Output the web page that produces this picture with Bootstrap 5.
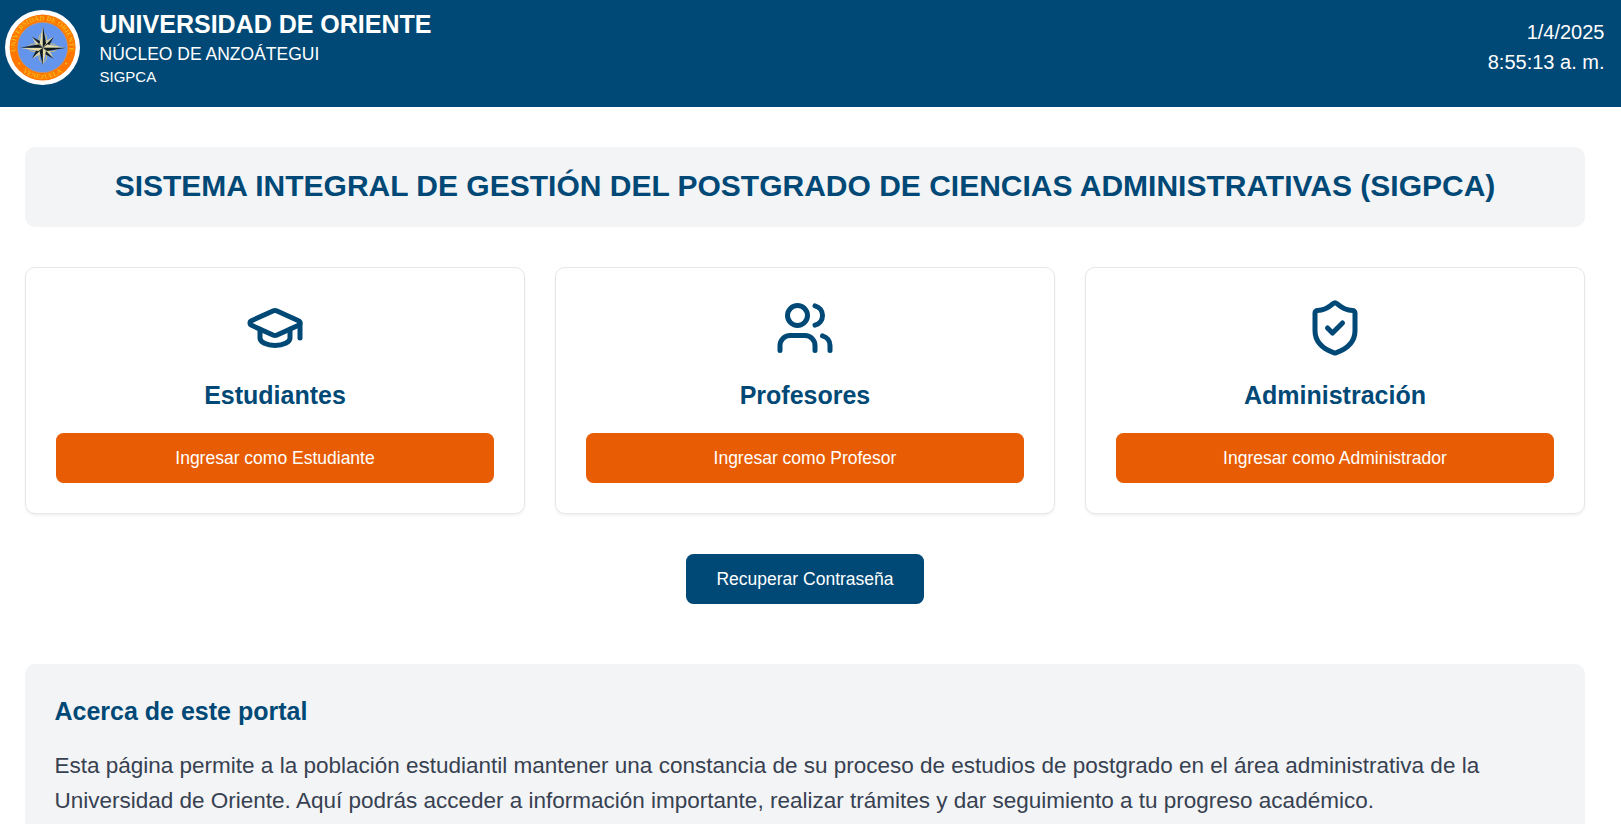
<!DOCTYPE html>
<html lang="es">
<head>
<meta charset="utf-8">
<meta name="viewport" content="width=device-width, initial-scale=1">
<title>SIGPCA - Universidad de Oriente</title>
<link href="https://cdn.jsdelivr.net/npm/bootstrap@5.3.0/dist/css/bootstrap.min.css" rel="stylesheet">
<style>
  :root { --udo-blue: #004976; --udo-orange: #e85d04; --udo-gray: #f3f4f6; }
  html, body { height: 100%; overflow: hidden; }
  body { font-family: "Liberation Sans", Arial, sans-serif; background: #fff; }
  .site-header { background: var(--udo-blue); height: 107px; padding: 9px 16.5px 0 5px; }
  .seal { width: 75px; height: 75px; margin-top: 1px; }
  .brand-text { margin-left: 19.5px; }
  .brand-name { font-size: 25px; line-height: 31.25px; margin-bottom: 1.5px; }
  .brand-campus { font-size: 17.5px; line-height: 25px; }
  .brand-system { font-size: 15px; line-height: 20px; }
  .clock { font-size: 20px; line-height: 30px; padding-top: 7.5px; }
  .portal { width: 1610px; padding: 40px 25px 0; }
  .panel { background: var(--udo-gray); border-radius: 10px; }
  .portal-title { font-size: 30px; line-height: 40px; padding: 19px 20px 21px; color: var(--udo-blue); }
  .access-row { --bs-gutter-x: 30px; margin-top: 40px; }
  .access-card { border: 1px solid #e5e7eb; border-radius: 10px; box-shadow: 0 1.25px 2.5px rgba(0,0,0,.05); }
  .access-card .card-body { padding: 30px; }
  .access-icon { width: 60px; height: 60px; fill: none; stroke: var(--udo-blue); stroke-width: 2; stroke-linecap: round; stroke-linejoin: round; }
  .section-title { font-size: 25px; line-height: 35px; color: var(--udo-blue); }
  .access-card .section-title { margin: 20px 0; }
  .btn-portal { height: 50px; padding: 0 30px; border: 0; border-radius: 7.5px; font-size: 17.5px; line-height: 50px; color: #fff; }
  .btn-portal:hover { color: #fff; }
  .btn-access, .btn-access:hover { background: var(--udo-orange); }
  .btn-recover, .btn-recover:hover { background: var(--udo-blue); }
  .recover { margin: 40px 0 60px; }
  .about { padding: 30px 30px 30px 29.5px; }
  .about-text { font-size: 22.5px; line-height: 35px; color: #374151; margin: 19px 0 0; }
</style>
</head>
<body>
<header class="site-header d-flex justify-content-between align-items-start text-white">
  <div class="d-flex align-items-start">
    <svg class="seal" viewBox="0 0 75 75" role="img" aria-label="Universidad de Oriente">
      <defs>
        <path id="arcTop" d="M14.6 51.7A27 27 0 1 1 60.4 51.7"/>
        <path id="arcBottom" d="M12.6 56.5A31.3 31.3 0 0 0 62.4 56.5"/>
        <g id="ray"><path d="M0 0L-3.2-4.2 0-22z" fill="#e6dca8"/><path d="M0 0L3.2-4.2 0-22z" fill="#111a1c"/></g>
        <g id="halfray"><path d="M0 0L-3.4-4.8 0-15.5z" fill="#d8d2a4"/><path d="M0 0L3.4-4.8 0-15.5z" fill="#172022"/></g>
      </defs>
      <circle cx="37.5" cy="37.5" r="37.5" fill="#fff"/>
      <circle cx="37.6" cy="37.5" r="33" fill="#ff7600"/>
      <circle cx="37.6" cy="37.5" r="25.2" fill="#6495ed" stroke="#dd9a50" stroke-width=".6"/>
      <g font-family="Liberation Serif, serif" font-weight="700" font-size="7" fill="#f5b81c">
        <text letter-spacing="-.1"><textPath href="#arcTop" startOffset="50%" text-anchor="middle">UNIVERSIDAD DE ORIENTE</textPath></text>
        <text letter-spacing="-.1"><textPath href="#arcBottom" startOffset="50%" text-anchor="middle">VENEZUELA</textPath></text>
      </g>
      <g fill="#f5b81c"><circle cx="14.2" cy="53.5" r="1"/><circle cx="61.2" cy="53.5" r="1"/></g>
      <g transform="translate(37.8 37.7)">
        <g fill="none" stroke="#d8bd64" stroke-width=".9">
          <ellipse cy="-9" rx="3.8" ry="5.6"/><ellipse cy="9" rx="3.8" ry="5.6"/>
          <ellipse cx="-9" rx="5.6" ry="3.8"/><ellipse cx="9" rx="5.6" ry="3.8"/>
        </g>
        <use href="#halfray" transform="rotate(45)"/><use href="#halfray" transform="rotate(135)"/>
        <use href="#halfray" transform="rotate(225)"/><use href="#halfray" transform="rotate(315)"/>
        <use href="#ray"/><use href="#ray" transform="rotate(90) scale(1 1.06)"/>
        <use href="#ray" transform="rotate(180) scale(1 .8)"/><use href="#ray" transform="rotate(270) scale(1 1.04)"/>
      </g>
    </svg>
    <div class="brand-text">
      <div class="brand-name fw-bold">UNIVERSIDAD DE ORIENTE</div>
      <div class="brand-campus">NÚCLEO DE ANZOÁTEGUI</div>
      <div class="brand-system">SIGPCA</div>
    </div>
  </div>
  <div class="clock text-end">
    <div>1/4/2025</div>
    <div>8:55:13 a. m.</div>
  </div>
</header>

<main class="portal">
  <h1 class="portal-title panel text-center fw-bold mb-0">SISTEMA INTEGRAL DE GESTIÓN DEL POSTGRADO DE CIENCIAS ADMINISTRATIVAS (SIGPCA)</h1>

  <div class="row access-row">
    <div class="col-4">
      <div class="card access-card">
        <div class="card-body d-flex flex-column align-items-center">
          <svg class="access-icon" viewBox="0 0 24 24" aria-hidden="true"><path d="M21.42 10.922a1 1 0 0 0-.019-1.838L12.83 5.18a2 2 0 0 0-1.66 0L2.6 9.08a1 1 0 0 0 0 1.832l8.57 3.908a2 2 0 0 0 1.66 0z"/><path d="M22 10v6"/><path d="M6 12.5V16a6 3 0 0 0 12 0v-3.5"/></svg>
          <h2 class="section-title fw-bold">Estudiantes</h2>
          <button type="button" class="btn btn-portal btn-access w-100">Ingresar como Estudiante</button>
        </div>
      </div>
    </div>
    <div class="col-4">
      <div class="card access-card">
        <div class="card-body d-flex flex-column align-items-center">
          <svg class="access-icon" viewBox="0 0 24 24" aria-hidden="true"><path d="M16 21v-2a4 4 0 0 0-4-4H6a4 4 0 0 0-4 4v2"/><circle cx="9" cy="7" r="4"/><path d="M22 21v-2a4 4 0 0 0-3-3.87"/><path d="M16 3.13a4 4 0 0 1 0 7.75"/></svg>
          <h2 class="section-title fw-bold">Profesores</h2>
          <button type="button" class="btn btn-portal btn-access w-100">Ingresar como Profesor</button>
        </div>
      </div>
    </div>
    <div class="col-4">
      <div class="card access-card">
        <div class="card-body d-flex flex-column align-items-center">
          <svg class="access-icon" viewBox="0 0 24 24" aria-hidden="true"><path d="M20 13c0 5-3.5 7.5-7.66 8.95a1 1 0 0 1-.67-.01C7.5 20.5 4 18 4 13V6a1 1 0 0 1 1-1c2 0 4.5-1.2 6.24-2.72a1.17 1.17 0 0 1 1.52 0C14.51 3.81 17 5 19 5a1 1 0 0 1 1 1z"/><path d="m9 12 2 2 4-4"/></svg>
          <h2 class="section-title fw-bold">Administración</h2>
          <button type="button" class="btn btn-portal btn-access w-100">Ingresar como Administrador</button>
        </div>
      </div>
    </div>
  </div>

  <div class="recover d-flex justify-content-center">
    <button type="button" class="btn btn-portal btn-recover">Recuperar Contraseña</button>
  </div>

  <section class="about panel">
    <h2 class="section-title fw-bold mb-0">Acerca de este portal</h2>
    <p class="about-text">Esta página permite a la población estudiantil mantener una constancia de su proceso de estudios de postgrado en el área administrativa de la Universidad de Oriente. Aquí podrás acceder a información importante, realizar trámites y dar seguimiento a tu progreso académico.</p>
  </section>
</main>
<script src="https://cdn.jsdelivr.net/npm/bootstrap@5.3.0/dist/js/bootstrap.bundle.min.js"></script>
</body>
</html>
